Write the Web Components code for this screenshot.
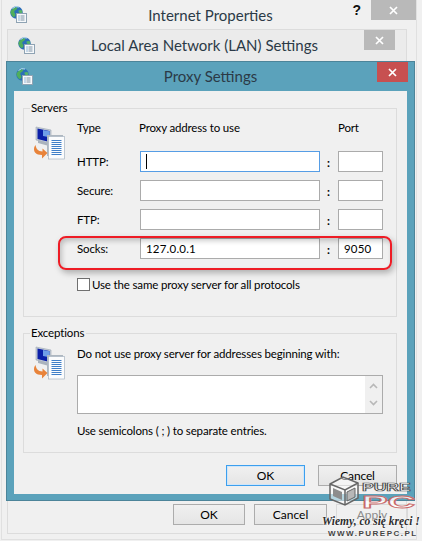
<!DOCTYPE html>
<html lang="en">
<head>
<meta charset="utf-8">
<title>Proxy Settings</title>
<style>
  html, body { margin: 0; padding: 0; width: 422px; height: 541px; overflow: hidden; background: #f0f0f0; }
</style>
</head>
<body>
<proxy-desktop></proxy-desktop>
<script>
// icons are shared by a few elements
const GLOBE_ICON = `
<svg width="17" height="17" viewBox="0 0 17 17" style="display:block">
  <circle cx="6.5" cy="6.5" r="6.2" fill="#2b6fb8"/>
  <path d="M2 3.5c2-2 4-2.500 5-2 1 1-1 2.500-2 3s-1 2 0 3 0 3-1 3.500S.5 8 .5 6.500 1 4.500 2 3.500z" fill="#4fae5c"/>
  <path d="M8.500 4.500c1-.8 3-.8 3.500 0s.5 2.500-1 3-3-2.200-2.500-3z" fill="#57b368"/>
  <path d="M2.500 2.500A6 6 0 0 1 9 1" stroke="#bfe3f5" stroke-width="1" fill="none"/>
  <rect x="6.500" y="7.500" width="10" height="9" fill="#f7f9fb" stroke="#8fa3b3"/>
  <path d="M8.500 10h1M8.500 12h1M8.500 14h1" stroke="#2f74b5"/>
  <path d="M10.500 10h4M10.500 12h4M10.500 14h4" stroke="#7e93a5"/>
</svg>`;

const NETWORK_ICON = `
<svg width="32" height="34" viewBox="0 0 32 34" style="display:block">
  <path d="M3 1l15 3v14L3 14z" fill="#c4ccd6" stroke="#9aa6b3" stroke-width=".6"/>
  <path d="M4.500 2.500l12 2.500v11L4.500 13z" fill="#0b1fa8"/>
  <path d="M10 4l6.500 1.200v6L10 10z" fill="#6f9de8"/>
  <path d="M5 14l11 3v3l-11-3z" fill="#aab3bd"/>
  <rect x="14" y="9" width="16" height="21" fill="#aeb7c0"/>
  <rect x="15.500" y="10.500" width="16" height="22.500" fill="#fbfcfd" stroke="#a9b5c0" stroke-width=".7"/>
  <path d="M18.500 14.500h10M18.500 16.500h10M18.500 18.500h10M18.500 20.500h10M18.500 22.500h10M18.500 24.500h10M18.500 26.500h10M18.500 28.500h10" stroke="#3f7fc8"/>
  <path d="M2.500 19c-2.500 3-2 8 2.500 9.500l4 .5v3.500l5.500-5.500-5-4.500v3l-3-.5C4 24 3 22 2.500 19z" fill="#e8833a"/>
</svg>`;

const UI_FONT = `Lato, "Noto Sans", sans-serif`;

// one dialog window with a title bar, lies on the desktop by its host style
class WinFrame extends HTMLElement {
  constructor() {
    super();
    this.root = this.attachShadow({mode: 'open'});
    const closeWidth = this.getAttribute('close-width') || '31';
    const closeColor = this.getAttribute('close-color') || '#b9b9b9';
    const closeRight = this.getAttribute('close-right') || '0';
    this.root.innerHTML = `
    <style>
      :host {
        box-sizing: border-box;
        display: flex;
        flex-direction: column;
        position: absolute;
        background: var(--frame, #ededed);
        border: 1px solid var(--edge, #d9d9d9);
        padding: 0 var(--side, 7px) var(--side, 7px);
        font-family: ${UI_FONT};
        letter-spacing: 0;
      }
      .bar {
        align-items: flex-start;
        display: flex;
        flex: none;
        height: var(--bar, 30px);
        justify-content: space-between;
        position: relative;
      }
      .icon { margin: var(--icon-top, 5px) 0 0 var(--icon-left, 2px); }
      .title {
        color: #2b3a47;
        font-size: 15px;
        left: var(--title-left, 0);
        line-height: 20px;
        position: absolute;
        right: var(--title-right, 0);
        text-align: center;
        top: var(--title-top, 5px);
      }
      .help {
        color: #111;
        font: bold 14px/18px "Liberation Sans", sans-serif;
        position: absolute;
        right: 49px;
        top: 1px;
      }
      .close {
        align-items: center;
        background: ${closeColor};
        display: flex;
        height: 20px;
        justify-content: center;
        margin-right: ${closeRight}px;
        position: relative;
        width: ${closeWidth}px;
      }
      .body { display: flex; flex: 1; flex-direction: column; min-height: 0; }
    </style>
    <div class="bar">
      <div class="icon">${GLOBE_ICON}</div>
      <div class="title">${this.getAttribute('heading')}</div>
      ${this.hasAttribute('help') ? '<div class="help">?</div>' : ''}
      <div class="close">
        <svg width="9" height="9" viewBox="0 0 9 9"><path d="M1 1l7 7M8 1l-7 7" stroke="#fff" stroke-width="1.700"/></svg>
      </div>
    </div>
    <div class="body"><slot></slot></div>`;
  }
}

// etched box with the caption on its top line
class GroupBox extends HTMLElement {
  constructor() {
    super();
    this.root = this.attachShadow({mode: 'open'});
    this.root.innerHTML = `
    <style>
      :host {
        border: 1px solid #dcdcdc;
        box-sizing: border-box;
        display: grid;
        grid-template-columns: 44px 1fr;
        padding: var(--pad-top, 11px) 13px 0 9px;
        position: relative;
      }
      .caption {
        background: #f0f0f0;
        font-size: 11.5px;
        left: 6px;
        letter-spacing: -.15px;
        line-height: 14px;
        padding: 0 2px 0 1px;
        position: absolute;
        top: -8px;
      }
      .icon { margin-top: var(--icon-top, 0); }
    </style>
    <div class="caption">${this.getAttribute('caption')}</div>
    <div class="icon">${NETWORK_ICON}</div>
    <div><slot></slot></div>`;
  }
}

// a label, the address box, a colon and the port box
class ProxyRow extends HTMLElement {
  constructor() {
    super();
    this.root = this.attachShadow({mode: 'open'});
    const focused = this.hasAttribute('focused');
    const mark = this.hasAttribute('mark');
    this.root.innerHTML = `
    <style>
      :host {
        align-items: center;
        display: grid;
        font-size: 11.5px;
        grid-template-columns: 63px 180px 18px 45px;
        height: 21px;
        letter-spacing: -.15px;
        margin-bottom: 8px;
        position: relative;
      }
      .box {
        align-items: center;
        background: #fff;
        border: 1px solid #ababab;
        box-sizing: border-box;
        display: flex;
        height: 21px;
        letter-spacing: .2px;
        padding-left: 5px;
      }
      .focus { border-color: #569de5; }
      .caret { background: #000; height: 15px; width: 1px; }
      .colon { font-weight: bold; margin-left: -1px; text-align: center; transform: translateY(1px); }
      .mark {
        border: 2px solid #ee1c25;
        border-radius: 8px;
        bottom: -11px;
        box-shadow: 2px 3px 6px rgba(0,0,0,.28), inset 2px 3px 5px rgba(0,0,0,.2);
        left: -19px;
        pointer-events: none;
        position: absolute;
        right: -9px;
        top: -2px;
      }
    </style>
    <span>${this.getAttribute('label')}</span>
    <div class="box ${focused ? 'focus' : ''}">${focused ? '<div class="caret"></div>' : ''}${this.getAttribute('address') || ''}</div>
    <span class="colon">:</span>
    <div class="box">${this.getAttribute('port') || ''}</div>
    ${mark ? '<div class="mark"></div>' : ''}`;
  }
}

class PushButton extends HTMLElement {
  constructor() {
    super();
    this.root = this.attachShadow({mode: 'open'});
    this.root.innerHTML = `
    <style>
      :host {
        align-items: center;
        background: linear-gradient(#f0f0f0, #e5e5e5);
        border: 1px solid #acacac;
        box-sizing: border-box;
        display: flex;
        flex: none;
        font-size: 12px;
        height: 21px;
        justify-content: center;
        width: var(--w, 79px);
      }
      :host([primary]) { border-color: #3c9fee; box-shadow: inset 0 0 0 1px #cfe6fa; }
      :host([disabled]) { color: #8a8a8a; background: none; border-color: #dadada; }
    </style>
    <slot></slot>`;
  }
}

// the contents of Proxy Settings
class ProxyForm extends HTMLElement {
  constructor() {
    super();
    this.root = this.attachShadow({mode: 'open'});
    this.root.innerHTML = `
    <style>
      :host {
        background: #f0f0f0;
        box-sizing: border-box;
        color: #000;
        display: flex;
        flex: 1;
        flex-direction: column;
        font-size: 11.5px;
        letter-spacing: -.15px;
        padding: 17px 10px 8px 9px;
      }
      .servers { height: 209px; margin-bottom: 16px; }
      .exceptions { height: 120px; --pad-top: 12px; --icon-top: 0; }
      .heads {
        display: grid;
        grid-template-columns: 62px 199px 1fr;
        height: 16px;
        line-height: 16px;
        margin-bottom: 15px;
      }
      .same {
        align-items: center;
        display: flex;
        gap: 2px;
        margin-top: 19px;
      }
      .check {
        background: #fff;
        border: 1px solid #707070;
        box-sizing: border-box;
        height: 13px;
        width: 13px;
      }
      .line { height: 16px; line-height: 16px; }
      .area {
        background: #fff;
        border: 1px solid #ababab;
        box-sizing: border-box;
        display: flex;
        height: 39px;
        justify-content: flex-end;
        margin: 13px 0 9px;
        width: 306px;
      }
      .scroll {
        align-items: center;
        background: #f0f0f0;
        display: flex;
        flex-direction: column;
        justify-content: space-between;
        padding: 7px 0;
        width: 17px;
      }
      .buttons { display: flex; gap: 13px; justify-content: flex-end; margin-top: 12px; }
    </style>
    <group-box class="servers" caption="Servers">
      <div class="heads"><span>Type</span><span>Proxy address to use</span><span>Port</span></div>
      <proxy-row label="HTTP:" focused></proxy-row>
      <proxy-row label="Secure:"></proxy-row>
      <proxy-row label="FTP:"></proxy-row>
      <proxy-row label="Socks:" address="127.0.0.1" port="9050" mark></proxy-row>
      <div class="same"><div class="check"></div><span>Use the same proxy server for all protocols</span></div>
    </group-box>
    <group-box class="exceptions" caption="Exceptions">
      <div class="line">Do not use proxy server for addresses beginning with:</div>
      <div class="area">
        <div class="scroll">
          <svg width="9" height="6" viewBox="0 0 9 6"><path d="M1 5l3.500-3.500L8 5" fill="none" stroke="#b8b8b8" stroke-width="1.600"/></svg>
          <svg width="9" height="6" viewBox="0 0 9 6"><path d="M1 1l3.500 3.500L8 1" fill="none" stroke="#b8b8b8" stroke-width="1.600"/></svg>
        </div>
      </div>
      <div class="line">Use semicolons ( ; ) to separate entries.</div>
    </group-box>
    <div class="buttons">
      <push-button primary>OK</push-button>
      <push-button>Cancel</push-button>
    </div>`;
  }
}

// site watermark in the lower right corner
class PureMark extends HTMLElement {
  constructor() {
    super();
    this.root = this.attachShadow({mode: 'open'});
    this.root.innerHTML = `
    <style>
      :host {
        display: block;
        height: 65px;
        left: 322px;
        overflow: hidden;
        pointer-events: none;
        position: absolute;
        top: 476px;
        width: 100px;
      }
      .top { display: flex; gap: 3px; height: 30px; margin-left: 7px; }
      .brand { display: flex; flex-direction: column; }
      .pure, .pc {
        color: rgba(255,255,255,.85);
        font-family: "Liberation Sans", sans-serif;
        font-weight: bold;
        transform-origin: left;
      }
      .pure {
        -webkit-text-stroke: .7px #4c4c4c;
        font-size: 10px;
        height: 12px;
        line-height: 12px;
        margin-top: 6px;
        transform: scaleX(1.750);
      }
      .pc {
        -webkit-text-stroke: .8px #c96a6a;
        font-size: 16px;
        height: 15px;
        line-height: 15px;
        margin-top: 1px;
        transform: scaleX(2.400);
      }
      .slogan {
        color: #2e2e2e;
        font: italic bold 11.500px/11px "Liberation Serif", serif;
        margin-top: 10px;
        text-shadow: 0 0 2px #fff, 0 0 2px #fff;
        white-space: nowrap;
      }
      .www {
        color: #444;
        font: bold 8px/9px "Liberation Sans", sans-serif;
        letter-spacing: 1.500px;
        margin: 2px 0 0 6px;
        text-shadow: 0 0 2px #fff;
        white-space: nowrap;
      }
    </style>
    <div class="top">
      <svg width="30" height="30" viewBox="0 0 30 30">
        <path d="M1 8L14 1l15 6v15l-13 7-15-6z" fill="rgba(255,255,255,.55)" stroke="#666" stroke-width="1.500"/>
        <path d="M1 8l15 6 13-7M16 14v15" fill="none" stroke="#666" stroke-width="1.500"/>
        <path d="M4 12l9 4v8l-9-4z" fill="#8d8d8d"/>
        <path d="M18 16l8-4v9l-8 4z" fill="#b7b7b7" stroke="#666"/>
      </svg>
      <div class="brand"><div class="pure">PURE</div><div class="pc">PC</div></div>
    </div>
    <div class="slogan">Wiemy, co się kręci !</div>
    <div class="www">WWW.PUREPC.PL</div>`;
  }
}

// three stacked windows, their place on the screen is the content here
class ProxyDesktop extends HTMLElement {
  constructor() {
    super();
    this.root = this.attachShadow({mode: 'open'});
    this.root.innerHTML = `
    <style>
      :host {
        background: #f0f0f0;
        display: block;
        height: 541px;
        overflow: hidden;
        position: relative;
        width: 422px;
      }
      .outer { left: 1px; top: -1px; width: 416px; height: 541px; --frame: #f0f0f0; --edge: #e0e0e0; --side: 6px; --bar: 30px; --icon-left: 2px; --icon-top: 6px; --title-left: 3px; --title-top: 5px; }
      .lan {
        left: 7px; top: 29px; width: 400px; height: 505px;
        --frame: #ebebeb; --edge: #dcdcdc; --side: 0px; --bar: 31px; --icon-left: 10px; --icon-top: 7px; --title-top: 5px; --title-right: 5px;
      }
      .lan-body {
        align-items: flex-start;
        background: #f0f0f0;
        box-sizing: border-box;
        display: flex;
        flex: 1;
        gap: 9px;
        padding: 443px 0 0 165px;
      }
      .proxy {
        left: 6px; top: 61px; width: 409px; height: 440px;
        --frame: #5ba2bb; --edge: #4c8499; --side: 7px; --bar: 29px; --icon-left: 2px; --icon-top: 6px; --title-top: 4px;
      }
    </style>
    <win-frame class="outer" heading="Internet Properties" help close-width="45" close-right="-6"></win-frame>
    <win-frame class="lan" heading="Local Area Network (LAN) Settings" close-right="11">
      <div class="lan-body">
        <push-button style="--w:72px">OK</push-button>
        <push-button style="--w:73px">Cancel</push-button>
        <push-button style="--w:72px" disabled>Apply</push-button>
      </div>
    </win-frame>
    <win-frame class="proxy" heading="Proxy Settings" close-color="#c75050" close-right="-1">
      <proxy-form></proxy-form>
    </win-frame>
    <pure-mark></pure-mark>`;
  }
}

customElements.define('win-frame', WinFrame);
customElements.define('group-box', GroupBox);
customElements.define('proxy-row', ProxyRow);
customElements.define('push-button', PushButton);
customElements.define('proxy-form', ProxyForm);
customElements.define('pure-mark', PureMark);
customElements.define('proxy-desktop', ProxyDesktop);
</script>
</body>
</html>
